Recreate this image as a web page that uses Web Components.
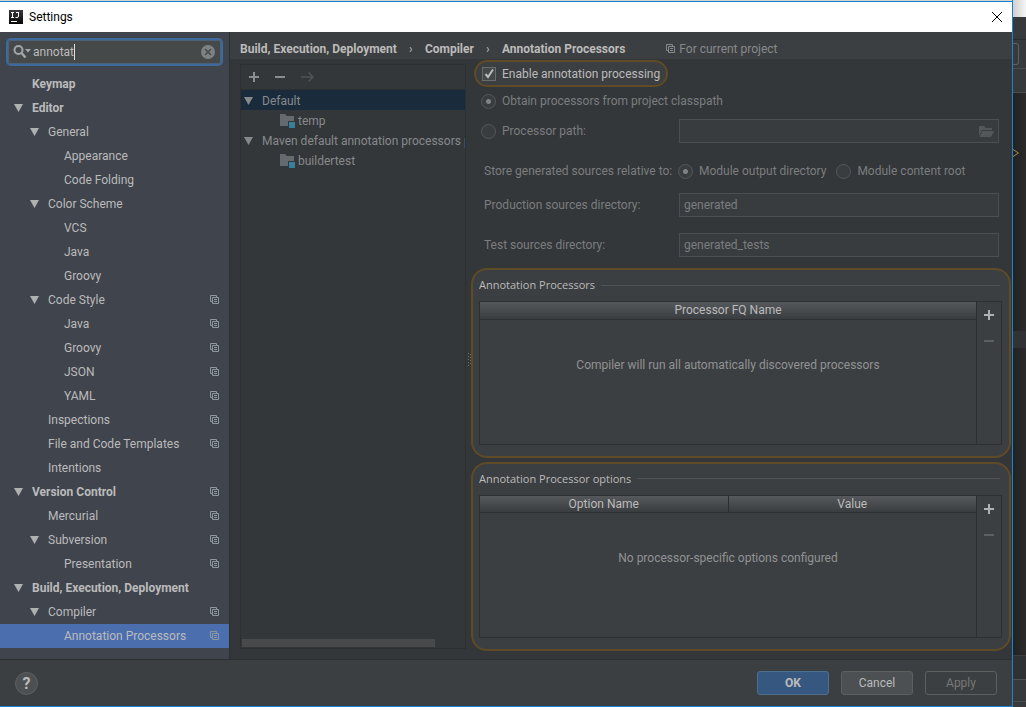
<!DOCTYPE html>
<html lang="en">
<head>
<meta charset="utf-8">
<meta name="viewport" content="width=device-width, initial-scale=1">
<title>Settings</title>
<style>
    :root {
        --panel: #3c3f41;
        --dim: #333739;
        --sidebar: #40444d;
        --line: #2d2f31;
        --field-line: #4b4e50;
        --accent: #1883d7;
        --select: #4b6eaf;
        --text: #bbbbbb;
        --text-dim: #87898b;
        --text-off: #7b7d7f;
        --mark: #5f4b25;
    }
    * { box-sizing: border-box; }
    body {
        margin: 0;
        height: 100vh;
        min-height: 640px;
        display: flex;
        background: #2b2b2b;
        color: var(--text);
        font: 12px/16px Roboto, "Open Sans", sans-serif;
        overflow: hidden;
    }
    settings-window { flex: 1; min-width: 0; }
    editor-edge { flex: none; }
</style>
</head>
<body>
<settings-window heading="Settings">
    <settings-nav slot="nav"></settings-nav>
    <bread-crumb slot="path" path="Build, Execution, Deployment|Compiler|Annotation Processors" note="For current project"></bread-crumb>
    <profile-panel slot="profiles"></profile-panel>
    <processor-form slot="form">
        <option-group heading="Annotation Processors" columns="Processor FQ Name" empty="Compiler will run all automatically discovered processors"></option-group>
        <option-group heading="Annotation Processor options" columns="Option Name|Value" empty="No processor-specific options configured"></option-group>
    </processor-form>
    <dialog-actions slot="actions"></dialog-actions>
</settings-window>
<editor-edge></editor-edge>

<script>
const reset = `
    * { box-sizing: border-box; }
    button, input { font: inherit; color: inherit; margin: 0; padding: 0; border: 0; background: none; border-radius: 0; outline: 0; }
    svg { display: block; flex: none; }
`;

const icons = {
    logo: `<svg width="14" height="14" viewBox="0 0 14 14"><defs><linearGradient id="g" x1="0" y1="0" x2="0" y2="1"><stop offset="0" stop-color="#3a3a3c"/><stop offset="1" stop-color="#060606"/></linearGradient></defs><path fill="url(#g)" d="M0 0h14v14H0z"/><path d="M2 2.500h3M3.500 2.500v5M2 7.500h3M7 2.500h3M9.500 2.500v3.500q0 1.500-1.500 1.500H6.500" fill="none" stroke="#fff"/><path fill="#fff" d="M2 11h6v1H2z"/></svg>`,
    close: `<svg width="10" height="10" viewBox="0 0 10 10"><path d="M0 0l10 10M10 0L0 10" stroke="#000" fill="none"/></svg>`,
    search: `<svg width="18" height="14" viewBox="0 0 18 14"><circle cx="5.500" cy="5" r="4" fill="none" stroke="#a2a6a8" stroke-width="2"/><path d="M8.500 8l4 4.500" stroke="#a2a6a8" stroke-width="2.500"/><path d="M12 4h6l-3 3.500z" fill="#a2a6a8"/></svg>`,
    clear: `<svg width="14" height="14" viewBox="0 0 14 14"><circle cx="7" cy="7" r="7" fill="#7f8183"/><path d="M4 4l6 6M10 4l-6 6" stroke="#454a4a" stroke-width="1.500"/></svg>`,
    arrow: `<svg width="9" height="8" viewBox="0 0 9 8"><path d="M0 0h9L4.500 8z" fill="currentColor"/></svg>`,
    copy: `<svg width="9" height="10" viewBox="0 0 9 10" fill="none" stroke="currentColor"><path d="M2 6.500H.5v-6h6V2M2.500 2.500h6v6h-6zM4 4.500h3M4 6.500h3"/></svg>`,
    plus: `<svg width="10" height="10" viewBox="0 0 10 10"><path d="M4 0h2v4h4v2H6v4H4V6H0V4h4z" fill="currentColor"/></svg>`,
    minus: `<svg width="10" height="10" viewBox="0 0 10 10"><path d="M0 4h10v2H0z" fill="currentColor"/></svg>`,
    move: `<svg width="13" height="10" viewBox="0 0 13 10"><path d="M0 5h12M7.500 .5L12 5 7.500 9.500" stroke="currentColor" stroke-width="1.500" fill="none"/></svg>`,
    module: `<svg width="16" height="14" viewBox="0 0 16 14"><path d="M0 0h5l2 2h7v5H8v5H0z" fill="#656a6e"/><path d="M9 8h6v6H9z" fill="#37809c"/></svg>`,
    folder: `<svg width="15" height="11" viewBox="0 0 15 11"><path d="M0 0h5l1.500 2H13v2H3L0 10z" fill="#54575a"/><path d="M3.500 5H15l-3 6H.5z" fill="#54575a"/></svg>`,
    grip: `<svg width="3" height="13" viewBox="0 0 3 13" fill="#6b6e70"><path d="M0 0h1v1H0zM2 1h1v1H2zM0 3h1v1H0zM2 4h1v1H2zM0 6h1v1H0zM2 7h1v1H2zM0 9h1v1H0zM2 10h1v1H2zM0 12h1v1H0z"/></svg>`
};

class SettingsWindow extends HTMLElement {
    constructor() {
        super();
        this.attachShadow({ mode: 'open' });
    }

    connectedCallback() {
        this.shadowRoot.innerHTML = `
            <style>
                ${reset}
                :host {
                    display: flex;
                    flex-direction: column;
                    background: var(--panel);
                    border-right: 1px solid var(--accent);
                    border-bottom: 1px solid var(--accent);
                }
                header {
                    display: flex;
                    align-items: center;
                    gap: 6px;
                    height: 32px;
                    padding: 0 10px 0 9px;
                    border-top: 1px solid #d5d1cd;
                    background: linear-gradient(var(--accent) 1px, #fff 1px);
                    color: #000;
                }
                h1 { flex: 1; margin: 0; font-size: 12px; font-weight: 400; }
                main {
                    flex: 1;
                    min-height: 0;
                    display: grid;
                    grid-template-columns: 230px minmax(0, 1fr);
                    grid-template-rows: 27px minmax(0, 1fr);
                    background: var(--dim);
                }
                .nav { grid-row: 1 / 3; border-right: 1px solid var(--line); background: var(--sidebar); }
                .path { background: var(--panel); }
                .work {
                    display: grid;
                    grid-template-columns: 226px 5px minmax(0, 1fr);
                    padding-left: 10px;
                }
                .grip { align-self: center; justify-self: end; }
            </style>
            <header>${icons.logo}<h1>${this.getAttribute('heading')}</h1><button aria-label="Close">${icons.close}</button></header>
            <main>
                <div class="nav"><slot name="nav"></slot></div>
                <div class="path"><slot name="path"></slot></div>
                <div class="work">
                    <slot name="profiles"></slot>
                    <span class="grip">${icons.grip}</span>
                    <slot name="form"></slot>
                </div>
            </main>
            <slot name="actions"></slot>
        `;
    }
}

// [depth, label, expandable, project level]
const navRows = [
    [0, 'Keymap', 0, 0],
    [0, 'Editor', 1, 0],
    [1, 'General', 1, 0],
    [2, 'Appearance', 0, 0],
    [2, 'Code Folding', 0, 0],
    [1, 'Color Scheme', 1, 0],
    [2, 'VCS', 0, 0],
    [2, 'Java', 0, 0],
    [2, 'Groovy', 0, 0],
    [1, 'Code Style', 1, 1],
    [2, 'Java', 0, 1],
    [2, 'Groovy', 0, 1],
    [2, 'JSON', 0, 1],
    [2, 'YAML', 0, 1],
    [1, 'Inspections', 0, 1],
    [1, 'File and Code Templates', 0, 1],
    [1, 'Intentions', 0, 0],
    [0, 'Version Control', 1, 1],
    [1, 'Mercurial', 0, 1],
    [1, 'Subversion', 1, 1],
    [2, 'Presentation', 0, 1],
    [0, 'Build, Execution, Deployment', 1, 0],
    [1, 'Compiler', 1, 1],
    [2, 'Annotation Processors', 0, 1],
];

class SettingsNav extends HTMLElement {
    constructor() {
        super();
        this.attachShadow({ mode: 'open' });
    }

    connectedCallback() {
        const rows = navRows.map(([depth, label, open, shared], i) => `
            <li class="d${depth}${i === navRows.length - 1 ? ' selected' : ''}">
                <span class="arrow">${open ? icons.arrow : ''}</span>
                <span class="label">${label}</span>
                ${shared ? `<span class="copy">${icons.copy}</span>` : ''}
            </li>`).join('');

        this.shadowRoot.innerHTML = `
            <style>
                ${reset}
                :host { display: block; }
                .search {
                    display: flex;
                    align-items: center;
                    height: 28px;
                    margin: 6px;
                    padding: 0 6px 0 5px;
                    border: 2px solid #3e6a9b;
                    border-radius: 5px;
                    background: #45494a;
                    box-shadow: inset 0 0 0 1px #4a6178;
                }
                .search label { margin-right: 2px; }
                input { field-sizing: content; height: 16px; }
                .caret { width: 1px; height: 16px; background: #dddddd; }
                .search button { margin-left: auto; }
                ul { list-style: none; margin: 0; padding: 0; }
                li { display: flex; align-items: center; height: 24px; padding-right: 10px; }
                .d0 { padding-left: 14px; font-weight: 700; }
                .d1 { padding-left: 30px; }
                .d2 { padding-left: 46px; }
                .arrow { width: 18px; color: #afb1b3; }
                .label { flex: 1; white-space: nowrap; }
                .copy { color: #8e979f; }
                .selected { background: var(--select); }
            </style>
            <div class="search">
                <label for="q" aria-label="Search settings">${icons.search}</label>
                <input id="q" value="annotat"><span class="caret"></span>
                <button aria-label="Clear">${icons.clear}</button>
            </div>
            <ul>${rows}</ul>
        `;
    }
}

class BreadCrumb extends HTMLElement {
    constructor() {
        super();
        this.attachShadow({ mode: 'open' });
    }

    connectedCallback() {
        const parts = this.getAttribute('path').split('|');
        this.shadowRoot.innerHTML = `
            <style>
                ${reset}
                :host {
                    display: flex;
                    align-items: center;
                    height: 27px;
                    padding: 6px 10px 0;
                    white-space: nowrap;
                }
                b { font-weight: 700; }
                .sep { width: 28px; text-align: center; }
                .note { display: flex; align-items: center; gap: 4px; margin-left: 41px; color: var(--text-dim); }
            </style>
            ${parts.map(p => `<b>${p}</b>`).join('<span class="sep">›</span>')}
            <span class="note">${icons.copy}<span>${this.getAttribute('note')}</span></span>
        `;
    }
}

class ProfilePanel extends HTMLElement {
    constructor() {
        super();
        this.attachShadow({ mode: 'open' });
    }

    connectedCallback() {
        this.shadowRoot.innerHTML = `
            <style>
                ${reset}
                :host {
                    display: flex;
                    flex-direction: column;
                    margin: 5px 0 10px;
                    border: 1px solid var(--line);
                    color: var(--text-dim);
                    overflow: hidden;
                }
                .tools { display: flex; align-items: center; gap: 16px; height: 25px; padding-left: 8px; border-bottom: 1px solid var(--line); }
                .tools button { color: #8b8d8f; }
                .tools button:disabled { color: #505355; }
                ul { flex: 1; list-style: none; margin: 0; padding: 0; }
                li { display: flex; align-items: center; height: 20px; padding: 2px 0 0 3px; white-space: nowrap; }
                .arrow { flex: none; width: 18px; }
                .child { padding-left: 39px; gap: 2px; }
                .selected { background: #1a2b3b; }
                .scroll { width: 193px; height: 8px; margin: 0 1px 1px; background: #47494b; }
            </style>
            <div class="tools">
                <button aria-label="Add">${icons.plus}</button>
                <button aria-label="Remove">${icons.minus}</button>
                <button aria-label="Move to" disabled>${icons.move}</button>
            </div>
            <ul>
                <li class="selected"><span class="arrow">${icons.arrow}</span>Default</li>
                <li class="child">${icons.module}<span>temp</span></li>
                <li><span class="arrow">${icons.arrow}</span>Maven default annotation processors p</li>
                <li class="child">${icons.module}<span>buildertest</span></li>
            </ul>
            <div class="scroll"></div>
        `;
    }
}

class ProcessorForm extends HTMLElement {
    constructor() {
        super();
        this.attachShadow({ mode: 'open' });
    }

    connectedCallback() {
        this.shadowRoot.innerHTML = `
            <style>
                ${reset}
                :host {
                    display: flex;
                    flex-direction: column;
                    min-width: 0;
                    padding: 1px 1px 8px 0;
                    color: var(--text-off);
                    white-space: nowrap;
                }
                label { display: flex; align-items: center; gap: 6px; }
                .enable {
                    align-self: flex-start;
                    height: 27px;
                    margin-left: 3px;
                    padding: 0 6px;
                    border: 2px solid var(--mark);
                    border-radius: 14px;
                    background: var(--panel);
                    color: var(--text);
                }
                input[type=checkbox] {
                    appearance: none;
                    width: 14px;
                    height: 14px;
                    border: 1px solid #6b6b6b;
                    background: #43494a;
                }
                input[type=checkbox]:checked {
                    background: #43494a url("data:image/svg+xml,%3Csvg xmlns='http://www.w3.org/2000/svg' viewBox='0 0 12 12'%3E%3Cpath d='M2.500 6l2.500 3 5-7.500' fill='none' stroke='%23bbbbbb' stroke-width='2'/%3E%3C/svg%3E");
                }
                input[type=radio] {
                    appearance: none;
                    width: 15px;
                    height: 15px;
                    border: 1px solid #55585a;
                    border-radius: 50%;
                    background: #393d3f;
                }
                input[type=radio]:checked { background: radial-gradient(circle, #808284 2px, #393d3f 3px); }
                .line {
                    display: grid;
                    grid-template-columns: 195px minmax(0, 1fr);
                    align-items: center;
                    height: 24px;
                    padding: 0 12px 0 13px;
                }
                .first { height: 28px; margin-left: 10px; }
                .path { margin-top: 4px; }
                .path label { margin-left: -3px; }
                .relative { margin-top: 16px; }
                .production { margin-top: 10px; }
                .test { margin: 16px 0 11px; }
                .options { display: flex; gap: 10px; margin-left: -1px; }
                .box {
                    display: flex;
                    align-items: center;
                    height: 24px;
                    padding: 0 4px;
                    border: 1px solid var(--field-line);
                    background: #393c3e;
                }
                .box input { flex: 1; min-width: 0; }
                ::slotted(option-group) { flex: 1; min-height: 0; }
                .groups { flex: 1; min-height: 0; display: flex; flex-direction: column; gap: 4px; }
            </style>
            <label class="enable"><input type="checkbox" checked>Enable annotation processing</label>
            <label class="first"><input type="radio" name="source" checked disabled>Obtain processors from project classpath</label>
            <div class="line path">
                <label><input type="radio" name="source" disabled>Processor path:</label>
                <span class="box"><input aria-label="Processor path" disabled>${icons.folder}</span>
            </div>
            <div class="line relative">
                <span>Store generated sources relative to:</span>
                <div class="options">
                    <label><input type="radio" name="root" checked disabled>Module output directory</label>
                    <label><input type="radio" name="root" disabled>Module content root</label>
                </div>
            </div>
            <div class="line production">
                <label for="production">Production sources directory:</label>
                <span class="box"><input id="production" value="generated" disabled></span>
            </div>
            <div class="line test">
                <label for="test">Test sources directory:</label>
                <span class="box"><input id="test" value="generated_tests" disabled></span>
            </div>
            <div class="groups"><slot></slot></div>
        `;
    }
}

class OptionGroup extends HTMLElement {
    constructor() {
        super();
        this.attachShadow({ mode: 'open' });
    }

    connectedCallback() {
        const columns = this.getAttribute('columns').split('|');
        this.shadowRoot.innerHTML = `
            <style>
                ${reset}
                :host {
                    display: flex;
                    flex-direction: column;
                    padding: 7px 7px 11px 6px;
                    border: 2px solid var(--mark);
                    border-radius: 16px;
                    background: var(--panel);
                    color: var(--text);
                }
                h2 { display: flex; align-items: center; gap: 6px; margin: 0 0 8px; font: 11px/16px "Open Sans", sans-serif; }
                h2::after { content: ""; flex: 1; height: 1px; margin-right: 2px; background: #505355; }
                .frame { flex: 1; display: grid; grid-template-columns: minmax(0, 1fr) 24px; border: 1px solid var(--line); }
                .list { display: flex; flex-direction: column; border-right: 1px solid var(--line); }
                table { width: 100%; border-collapse: collapse; table-layout: fixed; }
                th {
                    height: 17px;
                    padding: 1px 0 0;
                    line-height: 15px;
                    font-weight: 400;
                    border-bottom: 1px solid var(--line);
                    background: linear-gradient(#56595c, #3a3d3f);
                }
                th + th { border-left: 1px solid #2b2d2f; }
                p { margin: 37px 0 0; text-align: center; color: #909294; }
                .tools { display: flex; flex-direction: column; align-items: center; gap: 16px; padding-top: 8px; }
                .tools button { color: #afb1b3; }
                .tools button:disabled { color: #5d5f61; }
            </style>
            <h2>${this.getAttribute('heading')}</h2>
            <div class="frame">
                <div class="list">
                    <table><thead><tr>${columns.map(c => `<th>${c}</th>`).join('')}</tr></thead></table>
                    <p>${this.getAttribute('empty')}</p>
                </div>
                <div class="tools">
                    <button aria-label="Add">${icons.plus}</button>
                    <button aria-label="Remove" disabled>${icons.minus}</button>
                </div>
            </div>
        `;
    }
}

class DialogActions extends HTMLElement {
    constructor() {
        super();
        this.attachShadow({ mode: 'open' });
    }

    connectedCallback() {
        this.shadowRoot.innerHTML = `
            <style>
                ${reset}
                :host {
                    display: flex;
                    align-items: flex-end;
                    gap: 12px;
                    height: 47px;
                    padding: 0 15px 11px;
                    border-top: 1px solid var(--line);
                }
                button {
                    width: 72px;
                    height: 24px;
                    border: 1px solid #5e6060;
                    border-radius: 3px;
                    background: #4c5052;
                }
                .help { width: 23px; height: 23px; margin-right: auto; border-radius: 50%; font-size: 16px; font-weight: 700; line-height: 20px; }
                .ok { border-color: #4c708c; background: #365880; font-weight: 700; }
                button:disabled { background: none; color: #777777; }
            </style>
            <button class="help" aria-label="Help">?</button>
            <button class="ok">OK</button>
            <button>Cancel</button>
            <button disabled>Apply</button>
        `;
    }
}

// Slice of the editor window that stays visible behind the dialog
class EditorEdge extends HTMLElement {
    constructor() {
        super();
        this.attachShadow({ mode: 'open' });
    }

    connectedCallback() {
        this.shadowRoot.innerHTML = `
            <style>
                ${reset}
                :host { display: flex; flex-direction: column; width: 13px; overflow: hidden; }
                .title { height: 17px; background: linear-gradient(90deg, #d0d0d0, #f4f4f4); }
                .bar { display: flex; align-items: center; height: 23px; background: #37393b; border-bottom: 1px solid #2a2c2e; }
                .run { height: 29px; border-color: #4a4c4e; }
                .run i { width: 6px; height: 22px; border: 1px solid #5e6060; border-left: 0; border-radius: 0 3px 3px 0; }
                .tabs { height: 24px; border-color: #4a4c4e; }
                .code { flex: 1; padding-top: 53px; background: linear-gradient(90deg, #222222, #2b2b2b); }
                .code svg { margin-top: 3px; }
                .current { height: 17px; margin-top: 174px; background: #303234; }
                .status { height: 24px; border-top: 1px solid #3c3e40; background: #2f3133; }
                .foot { height: 28px; border-top: 1px solid #505254; background: linear-gradient(#38393b 21px, #4a4c4e 21px 22px, #38393b 22px); }
            </style>
            <div class="title"></div>
            <div class="bar"></div>
            <div class="bar run"><i></i></div>
            <div class="bar tabs"></div>
            <div class="code">
                <svg width="6" height="8" viewBox="0 0 6 8"><path d="M0 .5L5.500 4 0 7.500" fill="none" stroke="#a68a3e"/></svg>
                <div class="current"></div>
            </div>
            <div class="status"></div>
            <div class="foot"></div>
        `;
    }
}

customElements.define('settings-window', SettingsWindow);
customElements.define('settings-nav', SettingsNav);
customElements.define('bread-crumb', BreadCrumb);
customElements.define('profile-panel', ProfilePanel);
customElements.define('processor-form', ProcessorForm);
customElements.define('option-group', OptionGroup);
customElements.define('dialog-actions', DialogActions);
customElements.define('editor-edge', EditorEdge);
</script>
</body>
</html>
